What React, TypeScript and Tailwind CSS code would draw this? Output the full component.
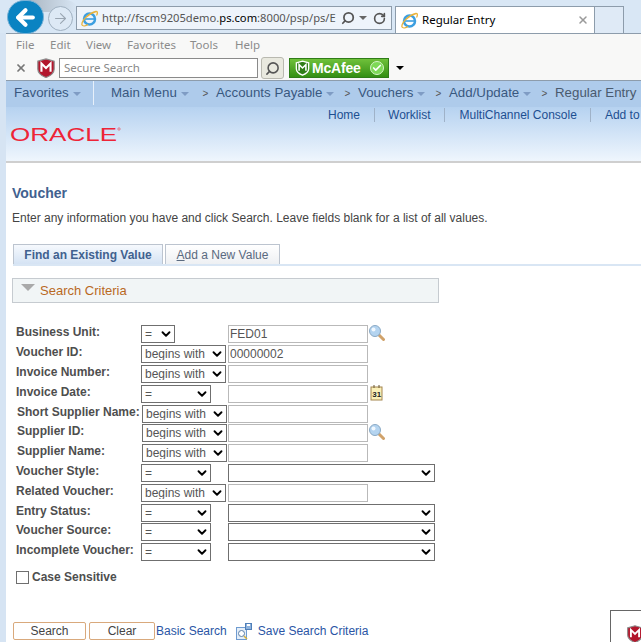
import { ChevronDown, Search, RotateCw, X, ArrowLeft, ArrowRight, Check } from "lucide-react";

const chrome = { fontFamily: '"Noto Sans", "Open Sans", sans-serif' };

const rows = [
  { label: "Business Unit:", op: "=", opW: "w-[34px]", field: "FED01", icon: "lookup" },
  { label: "Voucher ID:", op: "begins with", opW: "w-[85px]", field: "00000002" },
  { label: "Invoice Number:", op: "begins with", opW: "w-[85px]" },
  { label: "Invoice Date:", op: "=", opW: "w-[70px]", icon: "cal" },
  { label: "Short Supplier Name:", op: "begins with", opW: "w-[85px]", shift: true },
  { label: "Supplier ID:", op: "begins with", opW: "w-[85px]", shift: true, icon: "lookup", tight: true },
  { label: "Supplier Name:", op: "begins with", opW: "w-[85px]", shift: true },
  { label: "Voucher Style:", op: "=", opW: "w-[70px]", long: true },
  { label: "Related Voucher:", op: "begins with", opW: "w-[85px]" },
  { label: "Entry Status:", op: "=", opW: "w-[70px]", long: true },
  { label: "Voucher Source:", op: "=", opW: "w-[70px]", long: true, tight: true },
  { label: "Incomplete Voucher:", op: "=", opW: "w-[70px]", long: true },
];

function Dropdown({ value, className }: { value: string; className: string }) {
  return (
    <div className={`relative h-[18px] ${className}`}>
      <select
        defaultValue={value}
        className="block appearance-none w-full h-full border border-[#6f6f6f] bg-white pl-[3px] text-[12px] leading-none text-[#555] outline-none"
      >
        <option value={value}>{value}</option>
      </select>
      <ChevronDown size={14} strokeWidth={3.2} className="absolute right-[2px] top-[2px] text-black pointer-events-none" />
    </div>
  );
}

function LookupIcon() {
  return (
    <svg width="16" height="16" viewBox="0 0 16 16" className="ml-[1px]">
      <line x1="9" y1="9" x2="14.5" y2="14.5" stroke="#d0a26a" strokeWidth="3" strokeLinecap="round" />
      <circle cx="6" cy="6" r="5.500" fill="#b4d4f0" stroke="#8aa9c4" />
      <circle cx="4.500" cy="4.500" r="2" fill="#f1f8fe" />
    </svg>
  );
}

function CalendarIcon() {
  return (
    <svg width="14" height="16" viewBox="0 0 14 16" className="ml-[2px]">
      <rect x="1" y="2" width="11" height="13" fill="#fbf0b8" stroke="#a4854f" />
      <path d="M4 0v3M9 0v3" stroke="#6b5630" />
      <text x="2.2" y="12" fontSize="8" fontWeight="700" fill="#222" fontFamily="Liberation Sans, sans-serif">31</text>
    </svg>
  );
}

function Shield({ size = 22 }: { size?: number }) {
  return (
    <svg width={size} height={size} viewBox="0 0 22 22">
      <path d="M2 3.500 11 1l9 2.500V12c0 4.500-4 7.500-9 9.500C6 19.500 2 16.500 2 12Z" fill="#b3162c" stroke="#8d8d8d" strokeWidth="1.300" />
      <path d="M6 15V6l5 5 5-5v9" fill="none" stroke="#fff" strokeWidth="2.300" />
    </svg>
  );
}

function IeLogo() {
  return (
    <svg width="17" height="17" viewBox="0 0 17 17" className="shrink-0">
      <circle cx="8.500" cy="9" r="5.500" fill="none" stroke="#3d9fe0" strokeWidth="2.500" />
      <path d="M3 9h11" stroke="#3d9fe0" strokeWidth="1.600" />
      <path d="M1 15C0 11 8 3 15 1.500c2-.3 1.500 2.500.5 4" fill="none" stroke="#e9b23a" strokeWidth="1.300" />
      <path d="M1 15c1 1.500 4 .8 6-.5" fill="none" stroke="#e9b23a" strokeWidth="1.300" />
    </svg>
  );
}

function Crumb({ text, arrow = true, className = "" }: { text: string; arrow?: boolean; className?: string }) {
  return (
    <div className={`flex items-center shrink-0 ${className}`}>
      <span>{text}</span>
      {arrow && <span className="ml-[4px] mt-[2px] w-0 h-0 border-x-[4px] border-x-transparent border-t-[4px] border-t-[#7f9cc4]" />}
    </div>
  );
}

function Sep() {
  return <span className="shrink-0 w-[7px] text-[10px] text-[#555] text-center">&gt;</span>;
}

export default function App() {
  return (
    <div
      className="w-[641px] h-[642px] overflow-hidden flex flex-col bg-[#d6e4f3]"
      style={{ fontFamily: '"Liberation Sans", Arial, sans-serif' }}
    >
      {/* address bar row */}
      <div className="h-[33px] shrink-0 flex items-start bg-[#d9e7f5] relative">
        <div className="absolute left-[28px] top-0 w-[50px] h-[12px] rounded-tr-[12px] bg-gradient-to-r from-[#aab6c2] to-transparent" />
        <div className="relative ml-[7px] w-[37px] h-[34px] rounded-full bg-[#0a83c2] flex items-center justify-center border border-[#7ab2d6] shrink-0">
          <ArrowLeft size={25} strokeWidth={4} className="text-white" />
        </div>
        <div className="relative ml-[4px] mt-[6px] w-[25px] h-[25px] rounded-full border border-[#9fb0c0] bg-[#dde9f5] flex items-center justify-center shrink-0">
          <ArrowRight size={17} strokeWidth={1.500} className="text-[#9aa6b2]" />
        </div>
        <div
          className="ml-[3px] mt-[6px] w-[316px] h-[24px] shrink-0 border border-[#8d9cab] bg-[#eef4fb] flex items-center pl-[4px] pr-[5px] text-[11.2px] text-[#555]"
          style={chrome}
        >
          <IeLogo />
          <span className="ml-[4px] flex-1 min-w-0 whitespace-nowrap">
            http://fscm9205demo.<span className="text-black">ps.com</span>:8000/psp/ps/E
          </span>
          <Search size={14} strokeWidth={3} className="shrink-0 text-[#555] -scale-x-100" />
          <span className="ml-[4px] shrink-0 w-0 h-0 border-x-[4px] border-x-transparent border-t-[4px] border-t-[#666]" />
          <RotateCw size={13} strokeWidth={3} className="ml-[6px] shrink-0 text-[#555]" />
        </div>
        <div className="ml-[3px] mt-[6px] w-[200px] h-[27px] shrink-0 bg-white border border-b-0 border-[#8d9cab] flex items-center pl-[5px] pr-[5px] text-[11.5px] text-black" style={chrome}>
          <IeLogo />
          <span className="ml-[4px] flex-1">Regular Entry</span>
          <X size={12} strokeWidth={3} className="text-[#9a9a9a]" />
        </div>
        <div className="w-[29px] h-[27px] mt-[6px] shrink-0 border border-l-0 border-b-0 border-[#8d9cab] bg-[#dfeaf6]" />
      </div>

      <div className="flex-1 min-h-0 flex border-t border-[#8d9cab] ml-[6px]">
        <div className="flex-1 min-w-0 flex flex-col bg-white">
          {/* ie menu */}
          <div className="h-[22px] shrink-0 bg-[#f8f8f7] flex items-center pl-[10px] text-[11.5px] text-[#8b8b8b]" style={chrome}>
            <span className="w-[34px]">File</span>
            <span className="w-[36px]">Edit</span>
            <span className="w-[41px]">View</span>
            <span className="w-[63px]">Favorites</span>
            <span className="w-[45px]">Tools</span>
            <span>Help</span>
          </div>
          {/* ie toolbar */}
          <div className="h-[25px] shrink-0 bg-[#f8f8f7] flex items-center pl-[9px] border-b border-[#8d9cab]">
            <X size={12} strokeWidth={3.500} className="text-[#777]" />
            <div className="ml-[9px]"><Shield size={20} /></div>
            <div className="ml-[3px] w-[199px] h-[20px] border border-[#8a8a8a] bg-white pl-[4px] text-[11.5px] leading-[18px] text-[#888]" style={chrome}>Secure Search</div>
            <div className="ml-[3px] w-[23px] h-[22px] rounded-[3px] border border-[#b9b9b0] bg-[#e9e9df] flex items-center justify-center">
              <Search size={15} strokeWidth={2.500} className="text-[#555] -scale-x-100" />
            </div>
            <div className="ml-[5px] w-[100px] h-[20px] bg-gradient-to-b from-[#6fc13a] to-[#338f12] border border-[#2f7d18] flex items-center pl-[5px] text-white font-bold text-[14px]">
              <svg width="15" height="16" viewBox="0 0 22 22" className="shrink-0">
                <path d="M2 3.500 11 1l9 2.500V12c0 4.500-4 7.500-9 9.500C6 19.500 2 16.500 2 12Z" fill="#2f7d18" stroke="#fff" strokeWidth="2" />
                <path d="M6 15V6l5 5 5-5v9" fill="none" stroke="#fff" strokeWidth="2.300" />
              </svg>
              <span className="ml-[2px] tracking-[-0.2px]">McAfee</span>
              <span className="ml-[9px] shrink-0 w-[14px] h-[14px] rounded-full bg-[#7ed957] border border-[#d6f5c8] flex items-center justify-center">
                <Check size={10} strokeWidth={4} />
              </span>
            </div>
            <span className="ml-[7px] w-0 h-0 border-x-[4px] border-x-transparent border-t-[4px] border-t-black" />
          </div>
          {/* breadcrumb nav */}
          <div className="h-[26px] shrink-0 bg-[#aecbeb] flex items-center pb-[2px] text-[13.300px] text-[#39587f] whitespace-nowrap">
            <Crumb text="Favorites" className="ml-[8px] w-[79px]" />
            <span className="w-px h-[24px] bg-[#e7f0fa]" />
            <Crumb text="Main Menu" className="ml-[17px] w-[91px]" />
            <Sep />
            <Crumb text="Accounts Payable" className="ml-[7px] w-[128px]" />
            <Sep />
            <Crumb text="Vouchers" className="ml-[7px] w-[77px]" />
            <Sep />
            <Crumb text="Add/Update" className="ml-[7px] w-[92px]" />
            <Sep />
            <Crumb text="Regular Entry" arrow={false} className="ml-[7px] text-[#4a5a6e]" />
          </div>
          {/* portal header */}
          <div className="h-[56px] shrink-0 bg-gradient-to-b from-[#b6d2f0] to-[#eff6fd] border-b-2 border-[#cfcfcf] relative">
            <div className="flex items-center h-[16px] text-[12px] text-[#1d4f91] whitespace-nowrap">
              <span className="ml-[322px]">Home</span>
              <span className="ml-[14px] w-px h-[14px] bg-[#9fb2c8]" />
              <span className="ml-[13px]">Worklist</span>
              <span className="ml-[14px] w-px h-[14px] bg-[#9fb2c8]" />
              <span className="ml-[14px]">MultiChannel Console</span>
              <span className="ml-[13px] w-px h-[14px] bg-[#9fb2c8]" />
              <span className="ml-[14px]">Add to</span>
            </div>
            <svg width="116" height="24" viewBox="0 0 116 24" className="absolute left-[4px] top-[16px]">
              <text x="0" y="18" textLength="107" lengthAdjust="spacingAndGlyphs" fontSize="19" fill="#ee2437" fontFamily="Liberation Sans, sans-serif">ORACLE</text>
              <circle cx="109" cy="6" r="1.200" fill="none" stroke="#ee2437" strokeWidth="0.500" />
            </svg>
          </div>

          {/* page body */}
          <div className="flex-1 min-h-0 relative">
            <h1 className="ml-[6px] mt-[22px] text-[14px] leading-[17px] font-bold text-[#41618f]">Voucher</h1>
            <p className="ml-[6px] mt-[9px] text-[12px] leading-[14px] text-[#444]">
              Enter any information you have and click Search. Leave fields blank for a list of all values.
            </p>

            <div className="mt-[19px] ml-[7px] flex items-end gap-[2px] border-b-2 border-[#d9e6f4] h-[22px]">
              <div className="w-[150px] h-[20px] border border-b-0 border-[#bcc4cf] bg-gradient-to-b from-[#f6f9fd] to-[#d5e3f4] text-center text-[12px] leading-[20px] font-bold text-[#41618f]">
                Find an Existing Value
              </div>
              <div className="w-[115px] h-[20px] border border-b-0 border-[#bcc4cf] bg-gradient-to-b from-white to-[#eef0f3] text-center text-[12px] leading-[20px] text-[#5a6a80]">
                <span className="underline">A</span>dd a New Value
              </div>
            </div>

            <div className="mt-[12px] ml-[6px] w-[427px] h-[25px] bg-[#f1f5f6] border border-[#c6cbd0] flex items-center">
              <span className="ml-[8px] mb-[6px] w-0 h-0 border-x-[7px] border-x-transparent border-t-[7px] border-t-[#a9a9a9]" />
              <span className="ml-[5px] mt-[1px] text-[13px] text-[#b9691f]">Search Criteria</span>
            </div>

            <div className="mt-[22px] flex flex-col">
              {rows.map((r, i) => (
                <div key={r.label} className={`flex items-start ${i === 0 ? "" : r.tight ? "mt-px" : "mt-[2px]"}`}>
                  <label className={`w-[135px] shrink-0 text-[12px] leading-[14px] font-bold text-[#4e4e4e] whitespace-nowrap ${r.shift ? "pl-[11px]" : "pl-[10px]"}`}>
                    {r.label}
                  </label>
                  <div className="w-[87px] shrink-0">
                    <Dropdown value={r.op} className={`${r.opW} ${r.shift ? "ml-px" : ""}`} />
                  </div>
                  {r.long ? (
                    <Dropdown value="" className="w-[207px]" />
                  ) : (
                    <input
                      defaultValue={r.field ?? ""}
                      className="w-[140px] h-[18px] border border-[#b9b9b9] bg-white px-[1px] text-[12px] text-[#555] outline-none"
                    />
                  )}
                  {r.icon === "lookup" && <LookupIcon />}
                  {r.icon === "cal" && <CalendarIcon />}
                </div>
              ))}
            </div>

            <div className="mt-[7px] ml-[10px] flex items-center">
              <span className="w-[13px] h-[13px] border border-[#6f6f6f] bg-white" />
              <span className="ml-[3px] text-[12px] font-bold text-[#4e4e4e]">Case Sensitive</span>
            </div>

            <div className="mt-[36px] ml-[7px] flex items-center text-[12px]">
              <div className="w-[73px] h-[18px] rounded-[2px] border border-[#d9a97c] text-center leading-[16px] text-[#444]">Search</div>
              <div className="ml-[3px] w-[66px] h-[18px] rounded-[2px] border border-[#d9a97c] text-center leading-[16px] text-[#444]">Clear</div>
              <span className="ml-px text-[#2a55a5]">Basic Search</span>
              <svg width="16" height="17" viewBox="0 0 16 17" className="ml-[9px]">
                <rect x="0.500" y="4.500" width="10" height="12" fill="#e4eef8" stroke="#6f9bd0" />
                <circle cx="5.500" cy="10.500" r="3" fill="#fff" stroke="#5b7fa8" />
                <path d="m8 13 3 3" stroke="#d6b13a" strokeWidth="1.500" />
                <rect x="9.500" y="0.500" width="6" height="6" fill="#8fb3dd" stroke="#4f7fb8" />
                <rect x="11" y="1" width="3" height="2" fill="#fff" />
              </svg>
              <span className="ml-[6px] text-[#2a55a5]">Save Search Criteria</span>
            </div>

            <div className="absolute left-[604px] top-[447px] w-[40px] h-[40px] border border-[#666] bg-white pl-[15px] pt-[14px]">
              <Shield size={18} />
            </div>
          </div>
        </div>
      </div>
    </div>
  );
}
